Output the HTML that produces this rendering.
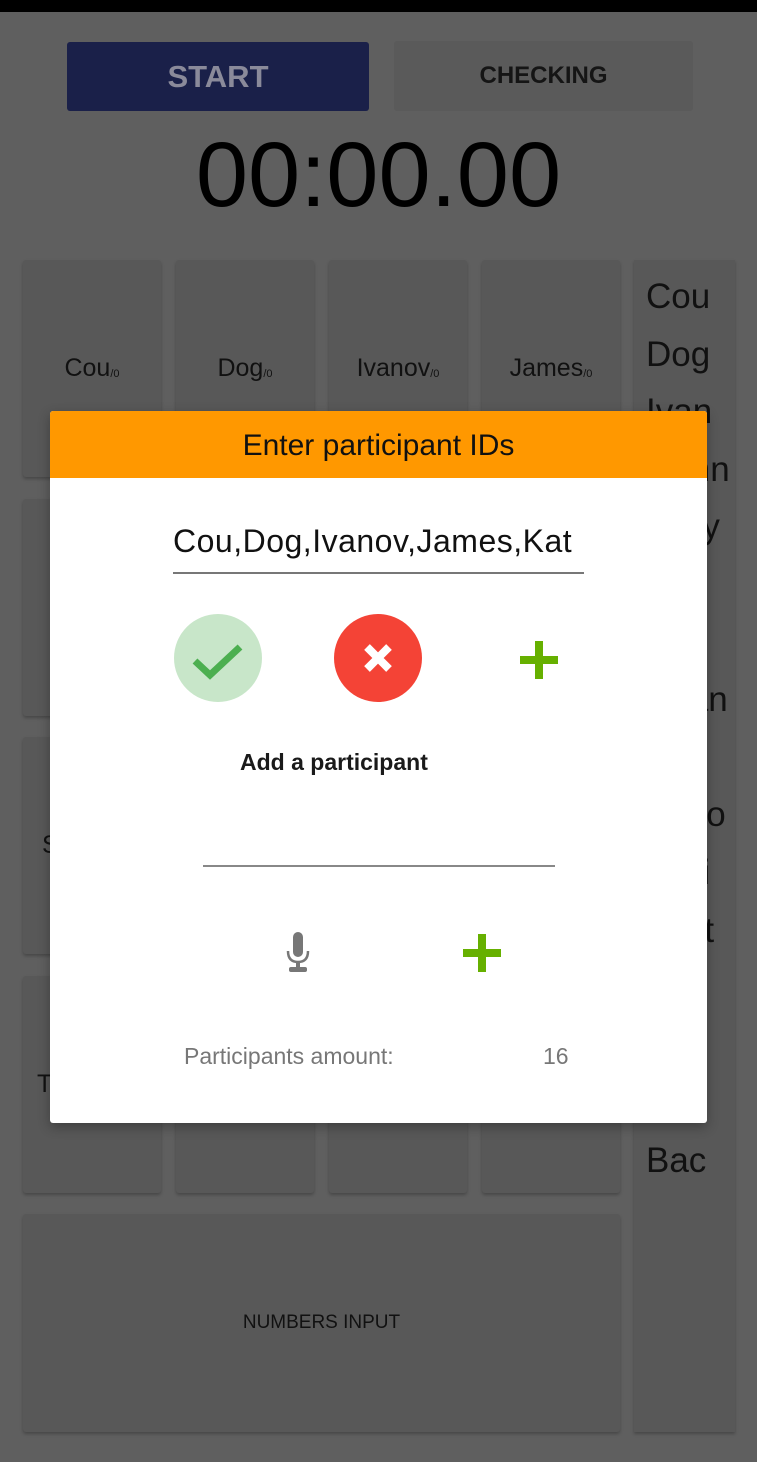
<!DOCTYPE html>
<html><head><meta charset="utf-8"><style>
*{margin:0;padding:0;box-sizing:border-box}
body{width:757px;height:1462px;background:#5f5f5f;position:relative;overflow:hidden;font-family:"Liberation Sans",sans-serif}
.abs{position:absolute}
.tile{position:absolute;background:#585858;border-radius:3px;box-shadow:0 2px 3px rgba(0,0,0,.25);display:flex;align-items:center;justify-content:center;font-size:25px;color:#111}
.tile small{font-size:11px;margin-top:10px}
.col{position:absolute;left:634px;top:260px;width:101px;height:1172px;background:#585858;box-shadow:0 2px 3px rgba(0,0,0,.25);overflow:hidden;padding-left:12px;font-size:35px;line-height:57.6px;color:#111;padding-top:8px;white-space:nowrap}
</style></head><body>
<div class="abs" style="left:0;top:0;width:757px;height:12px;background:#000"></div>
<div class="abs" style="left:67px;top:42px;width:302px;height:69px;background:#1a2049;border-radius:3px;color:#8a8a9a;font-size:31px;font-weight:bold;display:flex;align-items:center;justify-content:center">START</div>
<div class="abs" style="left:394px;top:41px;width:299px;height:70px;background:#5a5a5a;border-radius:3px;color:#151515;font-size:24px;font-weight:bold;display:flex;align-items:center;justify-content:center">CHECKING</div>
<div class="abs" style="left:0;top:128px;width:757px;text-align:center;font-size:92px;color:#000;line-height:95px;transform:scaleX(1.02)">00:00.00</div>

<div class="tile" style="left:23px;top:260px;width:138px;height:217px">Cou<small>/0</small></div>
<div class="tile" style="left:176px;top:260px;width:138px;height:217px">Dog<small>/0</small></div>
<div class="tile" style="left:329px;top:260px;width:138px;height:217px">Ivanov<small>/0</small></div>
<div class="tile" style="left:482px;top:260px;width:138px;height:217px">James<small>/0</small></div>
<div class="tile" style="left:23px;top:499px;width:138px;height:217px"></div>
<div class="tile" style="left:176px;top:499px;width:138px;height:217px"></div>
<div class="tile" style="left:329px;top:499px;width:138px;height:217px"></div>
<div class="tile" style="left:482px;top:499px;width:138px;height:217px"></div>
<div class="tile" style="left:23px;top:737px;width:138px;height:217px;justify-content:flex-start;padding-left:19px">S</div>
<div class="tile" style="left:176px;top:737px;width:138px;height:217px"></div>
<div class="tile" style="left:329px;top:737px;width:138px;height:217px"></div>
<div class="tile" style="left:482px;top:737px;width:138px;height:217px"></div>
<div class="tile" style="left:23px;top:976px;width:138px;height:217px;justify-content:flex-start;padding-left:14px">T</div>
<div class="tile" style="left:176px;top:976px;width:138px;height:217px"></div>
<div class="tile" style="left:329px;top:976px;width:138px;height:217px"></div>
<div class="tile" style="left:482px;top:976px;width:138px;height:217px"></div>
<div class="tile" style="left:23px;top:1214px;width:597px;height:218px;font-size:19px">NUMBERS INPUT</div>
<div class="col">Cou<br>Dog<br>Ivan<br>Dann<br>Tony<br>Al<br>Ed<br>Ryan<br>Ed<br>Theo<br>Toni<br>Matt<br>Brit<br>Nal<br>Li,<br>Bac</div>

<div class="abs" style="left:50px;top:411px;width:657px;height:712px;background:#fff;border-radius:3px;overflow:hidden;box-shadow:0 4px 12px rgba(0,0,0,.3)">
  <div style="height:67px;background:#ff9800;color:#111;font-size:30px;text-align:center;line-height:69px">Enter participant IDs</div>
  <div class="abs" style="left:123px;top:112px;width:411px;height:51px;border-bottom:2px solid #777;font-size:32px;color:#111;white-space:nowrap;overflow:hidden;letter-spacing:0.5px">Cou,Dog,Ivanov,James,Kat</div>
  <div class="abs" style="left:124px;top:203px;width:88px;height:88px;border-radius:50%;background:#c8e6c9"></div>
  <svg class="abs" style="left:124px;top:203px" width="88" height="88"><path d="M21 47 L36 61 L66 33" stroke="#4caf50" stroke-width="7" fill="none"/></svg>
  <div class="abs" style="left:284px;top:203px;width:88px;height:88px;border-radius:50%;background:#f44336"></div>
  <svg class="abs" style="left:284px;top:203px" width="88" height="88"><path d="M33 33 L55 55 M55 33 L33 55" stroke="#fff" stroke-width="8" fill="none"/></svg>
  <svg class="abs" style="left:468px;top:228px" width="42" height="42"><path d="M21 2 V40 M2 21 H40" stroke="#66b000" stroke-width="8"/></svg>
  <div class="abs" style="left:190px;top:338px;font-size:23px;font-weight:bold;color:#1a1a1a">Add a participant</div>
  <div class="abs" style="left:153px;top:454px;width:352px;height:2px;background:#888"></div>
  <svg class="abs" style="left:233px;top:520px" width="30" height="44"><rect x="10" y="1" width="10" height="25" rx="5" fill="#777"/><path d="M5 20 Q5 31 15 31 Q25 31 25 20" stroke="#777" stroke-width="2.5" fill="none"/><rect x="13" y="31" width="4" height="6" fill="#777"/><rect x="6" y="36" width="18" height="5" rx="2" fill="#777"/></svg>
  <svg class="abs" style="left:411px;top:521px" width="42" height="42"><path d="M21 2 V40 M2 21 H40" stroke="#66b000" stroke-width="8"/></svg>
  <div class="abs" style="left:134px;top:632px;font-size:23px;color:#777">Participants amount:</div>
  <div class="abs" style="left:493px;top:632px;font-size:23px;color:#777">16</div>
</div>
</body></html>
